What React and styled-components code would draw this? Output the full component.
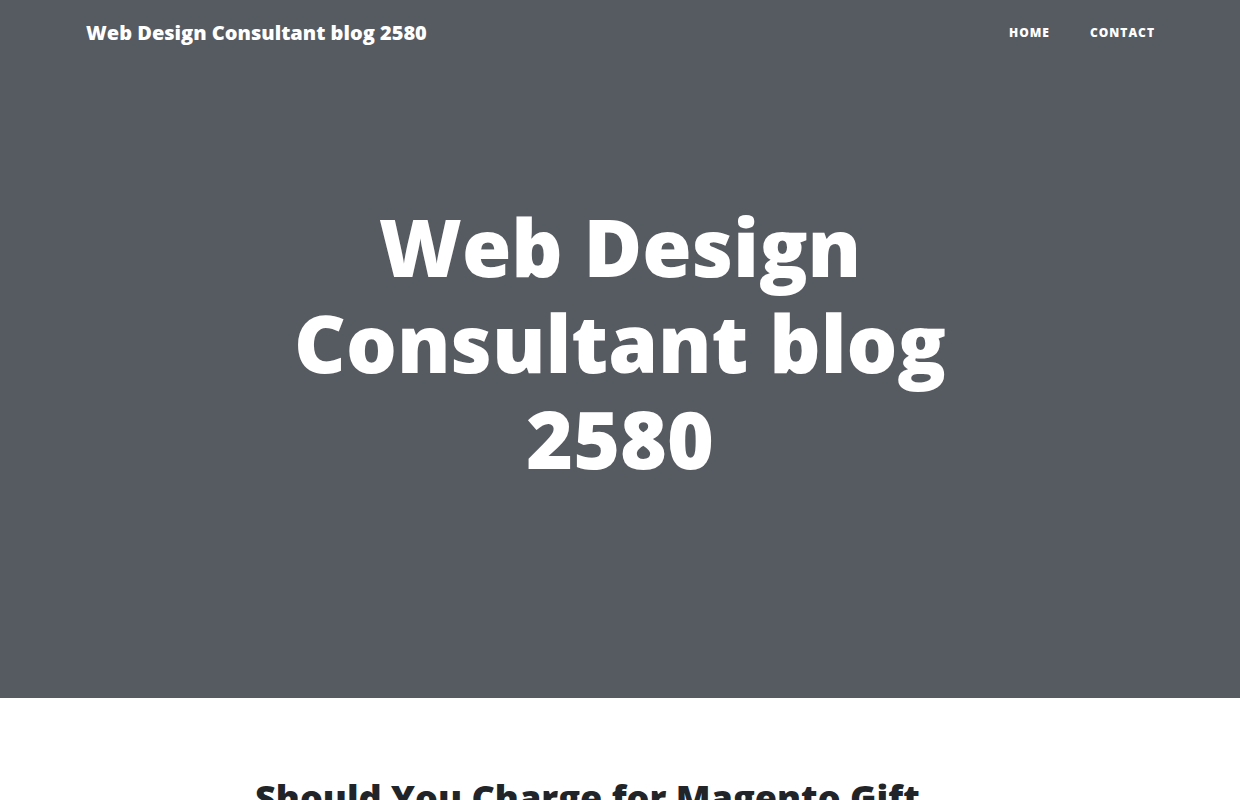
import React from "react";
import styled, { createGlobalStyle } from "styled-components";

const GlobalStyle = createGlobalStyle`
  html, body {
    margin: 0;
    padding: 0;
  }
  body {
    font-family: "Open Sans", "Liberation Sans", sans-serif;
    color: #212529;
    background: #fff;
  }
  * {
    box-sizing: border-box;
  }
`;

const Nav = styled.nav`
  position: absolute;
  top: 0;
  left: 0;
  right: 0;
  z-index: 10;
  display: flex;
  align-items: center;
  justify-content: space-between;
  height: 65px;
  padding: 0 65px 0 86px;
`;

const Brand = styled.a`
  font-size: 20px;
  font-weight: 800;
  color: #fff;
  text-decoration: none;
  line-height: 1.2;
`;

const NavLinks = styled.ul`
  display: flex;
  list-style: none;
  margin: 0;
  padding: 0;
`;

const NavLink = styled.a`
  display: block;
  padding: 10px 20px;
  font-size: 12px;
  font-weight: 800;
  letter-spacing: 1px;
  text-transform: uppercase;
  color: #fff;
  text-decoration: none;
`;

const Masthead = styled.header`
  background: #565a61;
  margin-bottom: 50px;
`;

const Container = styled.div`
  width: 760px;
  margin: 0 auto;
  padding: 0 15px;
`;

const SiteHeading = styled.div`
  padding: 198px 0 212px;
  text-align: center;
  color: #fff;

  h1 {
    margin: 0;
    font-size: 80px;
    font-weight: 800;
    line-height: 96px;
  }
`;

const PostPreview = styled.div`
  h2 {
    margin: 78px 0 10px;
    font-size: 36px;
    font-weight: 800;
    line-height: 1.2;
    color: #212529;
  }
`;

export default function App() {
  return (
    <>
      <GlobalStyle />
      <Nav>
        <Brand href="#">Web Design Consultant blog 2580</Brand>
        <NavLinks>
          <li>
            <NavLink href="#">Home</NavLink>
          </li>
          <li>
            <NavLink href="#">Contact</NavLink>
          </li>
        </NavLinks>
      </Nav>
      <Masthead>
        <Container>
          <SiteHeading>
            <h1>Web Design Consultant blog 2580</h1>
          </SiteHeading>
        </Container>
      </Masthead>
      <Container>
        <PostPreview>
          <h2>Should You Charge for Magento Gift Cards?</h2>
        </PostPreview>
      </Container>
    </>
  );
}
